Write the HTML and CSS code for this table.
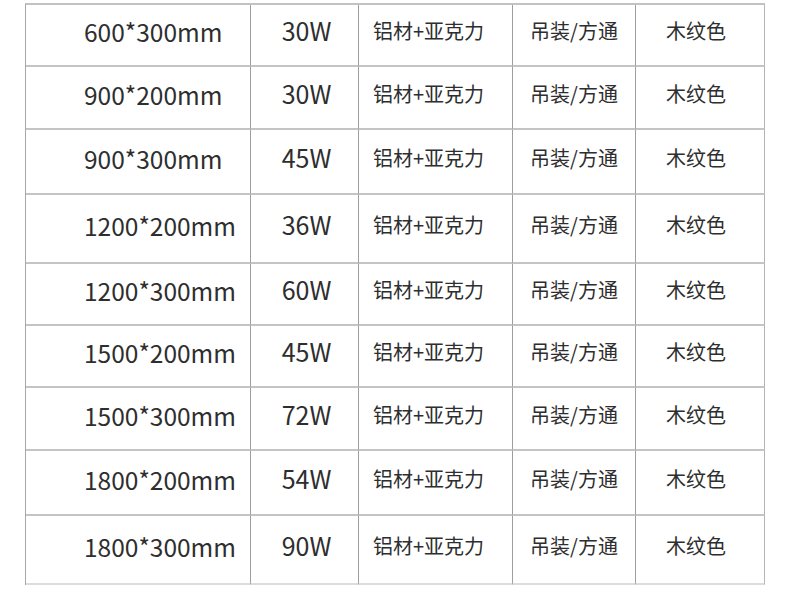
FILE: index.html
```html
<!DOCTYPE html>
<html lang="zh">
<head>
<meta charset="utf-8">
<title>规格表</title>
<link rel="stylesheet" href="styles.css">
</head>
<body>
<div class="spec">
  <div class="c size">600*300mm</div><div class="c watt">30W</div><div class="c mat">铝材+亚克力</div><div class="c inst">吊装/方通</div><div class="c color">木纹色</div>
  <div class="c size">900*200mm</div><div class="c watt">30W</div><div class="c mat">铝材+亚克力</div><div class="c inst">吊装/方通</div><div class="c color">木纹色</div>
  <div class="c size">900*300mm</div><div class="c watt">45W</div><div class="c mat">铝材+亚克力</div><div class="c inst">吊装/方通</div><div class="c color">木纹色</div>
  <div class="c size">1200*200mm</div><div class="c watt">36W</div><div class="c mat">铝材+亚克力</div><div class="c inst">吊装/方通</div><div class="c color">木纹色</div>
  <div class="c size">1200*300mm</div><div class="c watt">60W</div><div class="c mat">铝材+亚克力</div><div class="c inst">吊装/方通</div><div class="c color">木纹色</div>
  <div class="c size">1500*200mm</div><div class="c watt">45W</div><div class="c mat">铝材+亚克力</div><div class="c inst">吊装/方通</div><div class="c color">木纹色</div>
  <div class="c size">1500*300mm</div><div class="c watt">72W</div><div class="c mat">铝材+亚克力</div><div class="c inst">吊装/方通</div><div class="c color">木纹色</div>
  <div class="c size">1800*200mm</div><div class="c watt">54W</div><div class="c mat">铝材+亚克力</div><div class="c inst">吊装/方通</div><div class="c color">木纹色</div>
  <div class="c size">1800*300mm</div><div class="c watt">90W</div><div class="c mat">铝材+亚克力</div><div class="c inst">吊装/方通</div><div class="c color">木纹色</div>
</div>
</body>
</html>
```

FILE: styles.css
```css
html, body {
  margin: 0;
  padding: 0;
  background: #ffffff;
}

body {
  font-family: "Noto Sans CJK SC", "Noto Sans", sans-serif;
  color: #2e2e2e;
}

.spec {
  margin: 3px 0 0 25px;
  width: 739px;
  display: grid;
  grid-template-columns: 225px 108px 154px 123px 129px;
  grid-template-rows: 62px 63px 65px 69px 62px 62px 63px 65px 69px;
  border-top: 2px solid #c2c2c2;
  border-left: 1px solid #a8a8a8;
}

.c {
  box-sizing: border-box;
  display: flex;
  align-items: center;
  justify-content: center;
  border-right: 1px solid #9e9e9e;
  border-bottom: 2px solid #c4c4c4;
  white-space: nowrap;
  line-height: 1.2;
}

.spec .c:nth-last-child(-n+5) {
  border-bottom-color: #dcdcdc;
}

.size {
  justify-content: flex-start;
  padding-left: 58px;
  font-size: 24.5px;
  padding-bottom: 6px;
}

.watt {
  font-size: 25px;
  padding-left: 4px;
  padding-bottom: 10px;
}

.mat {
  font-size: 20px;
  padding-right: 14px;
  padding-bottom: 8px;
}

.inst {
  font-size: 20px;
  padding-bottom: 8px;
}

.color {
  font-size: 20px;
  padding-right: 8px;
  padding-bottom: 8px;
  border-right-color: #b4b4b4;
}
```
